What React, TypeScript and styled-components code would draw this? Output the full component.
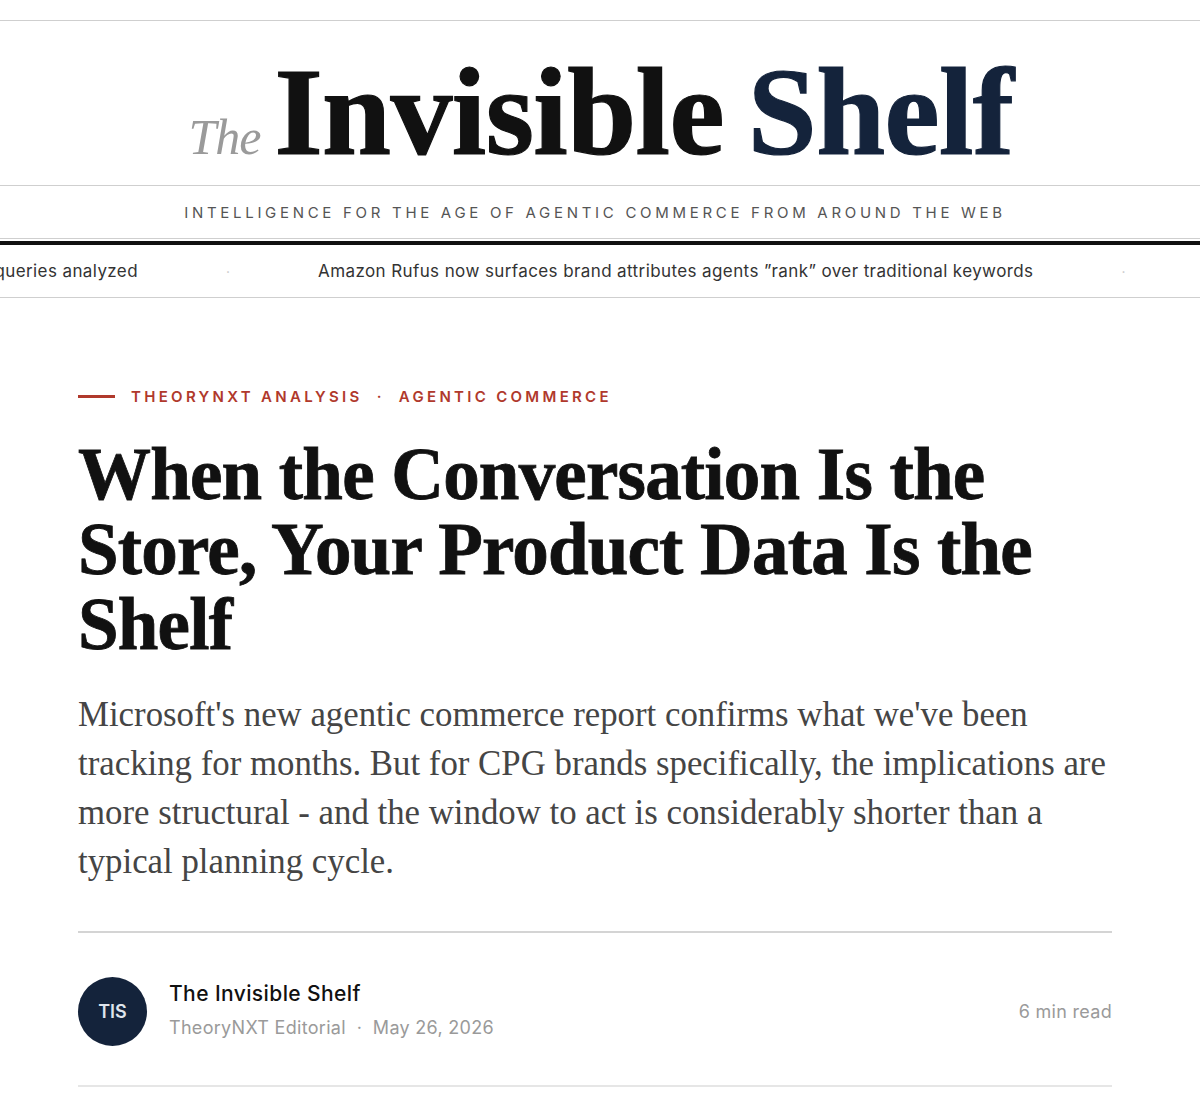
import React from "react";
import styled, { createGlobalStyle } from "styled-components";

const GlobalStyle = createGlobalStyle`
  html, body {
    margin: 0;
    padding: 0;
    background: #ffffff;
  }
  body {
    font-family: "Inter", "Liberation Sans", sans-serif;
    color: #111111;
  }
`;

const SANS = `"Inter", "Liberation Sans", sans-serif`;
const SERIF = `"Liberation Serif", "DejaVu Serif", serif`;

const Page = styled.div`
  padding-top: 20px;
`;

const Masthead = styled.header`
  border-top: 1px solid #cfcfcf;
  height: 165px;
  display: flex;
  justify-content: center;
  align-items: flex-end;
  padding-bottom: 10px;
  box-sizing: border-box;
`;

const Brand = styled.h1`
  margin: 0;
  display: flex;
  align-items: baseline;
  gap: 14px;
  font-family: ${SERIF};
  line-height: 1;
  padding-left: 2px;
`;

const BrandThe = styled.span`
  font-style: italic;
  font-weight: 400;
  font-size: 50px;
  color: #9a9a9a;
  letter-spacing: -1px;
`;

const BrandWord = styled.span<{ $tone: "ink" | "navy" }>`
  font-weight: 700;
  font-size: 124px;
  letter-spacing: -0.6px;
  color: ${(p) => (p.$tone === "navy" ? "#14233b" : "#111111")};
  -webkit-text-stroke: 1.2px currentColor;
`;

const BrandWords = styled.span`
  display: flex;
  gap: 24px;
`;

const TaglineBar = styled.div`
  border-top: 1px solid #cfcfcf;
  border-bottom: 1px solid #cfcfcf;
  height: 54px;
  box-sizing: border-box;
  display: flex;
  align-items: center;
  justify-content: center;
  padding-right: 10px;
  margin-bottom: 2px;
`;

const Tagline = styled.p`
  margin: 0;
  font-family: ${SANS};
  font-size: 15px;
  letter-spacing: 3.7px;
  color: #555555;
  text-transform: uppercase;
`;

const Ticker = styled.div`
  border-top: 4px solid #111111;
  border-bottom: 1px solid #cfcfcf;
  height: 57px;
  box-sizing: border-box;
  display: flex;
  align-items: center;
  gap: 88px;
  overflow: hidden;
  white-space: nowrap;
`;

const TickerLead = styled.div`
  flex: 0 0 138px;
  display: flex;
  justify-content: flex-end;
  overflow: hidden;
`;

const TickerItem = styled.span`
  flex: none;
  font-family: ${SANS};
  font-size: 17px;
  letter-spacing: 0.4px;
  color: #333333;
`;

const TickerDot = styled.span`
  flex: none;
  font-family: ${SANS};
  font-size: 14px;
  color: #c8c8c8;
`;

const Article = styled.main`
  width: 1034px;
  margin-left: 78px;
  padding-top: 89px;
`;

const Kicker = styled.div`
  display: flex;
  align-items: center;
  gap: 16px;
  font-family: ${SANS};
  font-size: 15px;
  font-weight: 600;
  letter-spacing: 3.3px;
  color: #b0392c;
  text-transform: uppercase;
`;

const KickerRule = styled.span`
  width: 37px;
  height: 3px;
  background: #b0392c;
`;

const Headline = styled.h2`
  margin: 31px 0 0;
  font-family: ${SERIF};
  font-weight: 700;
  font-size: 73px;
  line-height: 75px;
  letter-spacing: -0.8px;
  color: #111111;
  -webkit-text-stroke: 0.8px #111111;
`;

const Dek = styled.p`
  margin: 28px 0 0;
  width: 1050px;
  font-family: ${SERIF};
  font-size: 34.8px;
  line-height: 49px;
  color: #454545;
`;

const Byline = styled.section`
  margin-top: 45px;
  border-top: 2px solid #d4d4d4;
  border-bottom: 2px solid #e6e6e6;
  padding: 44px 0 39px;
  display: flex;
  align-items: center;
  gap: 22px;
`;

const Avatar = styled.div`
  width: 69px;
  height: 69px;
  border-radius: 50%;
  background: #14233b;
  color: #dfe4ec;
  display: flex;
  align-items: center;
  justify-content: center;
  font-family: ${SANS};
  font-size: 18px;
  font-weight: 600;
`;

const AuthorBlock = styled.div`
  display: flex;
  flex-direction: column;
  gap: 11px;
  padding-bottom: 4px;
  flex: 1;
`;

const AuthorName = styled.div`
  font-family: ${SANS};
  font-size: 21px;
  font-weight: 500;
  letter-spacing: 0.4px;
  color: #111111;
`;

const AuthorMeta = styled.div`
  font-family: ${SANS};
  font-size: 18px;
  letter-spacing: 0.3px;
  color: #9a9a9a;
`;

const ReadTime = styled.div`
  font-family: ${SANS};
  font-size: 18px;
  letter-spacing: 0.3px;
  color: #9a9a9a;
`;

export default function App() {
  return (
    <>
      <GlobalStyle />
      <Page>
        <Masthead>
          <Brand>
            <BrandThe>The</BrandThe>
            <BrandWords>
              <BrandWord $tone="ink">Invisible</BrandWord>
              <BrandWord $tone="navy">Shelf</BrandWord>
            </BrandWords>
          </Brand>
        </Masthead>
        <TaglineBar>
          <Tagline>Intelligence for the age of agentic commerce from around the web</Tagline>
        </TaglineBar>
        <Ticker>
          <TickerLead>
            <TickerItem>AI-assisted discovery now touches 1 in 4 of 2.4M shopping queries analyzed</TickerItem>
          </TickerLead>
          <TickerDot>·</TickerDot>
          <TickerItem>Amazon Rufus now surfaces brand attributes agents ”rank” over traditional keywords</TickerItem>
          <TickerDot>·</TickerDot>
          <TickerItem>Retailers race to expose structured catalogs to shopping agents</TickerItem>
        </Ticker>
        <Article>
          <Kicker>
            <KickerRule />
            <span>TheoryNXT Analysis &nbsp;·&nbsp; Agentic Commerce</span>
          </Kicker>
          <Headline>
            When the Conversation Is the Store, Your Product Data Is the Shelf
          </Headline>
          <Dek>
            Microsoft's new agentic commerce report confirms what we've been tracking for months. But for
            CPG brands specifically, the implications are more structural - and the window to act is
            considerably shorter than a typical planning cycle.
          </Dek>
          <Byline>
            <Avatar>TIS</Avatar>
            <AuthorBlock>
              <AuthorName>The Invisible Shelf</AuthorName>
              <AuthorMeta>TheoryNXT Editorial &nbsp;·&nbsp; May 26, 2026</AuthorMeta>
            </AuthorBlock>
            <ReadTime>6 min read</ReadTime>
          </Byline>
        </Article>
      </Page>
    </>
  );
}
